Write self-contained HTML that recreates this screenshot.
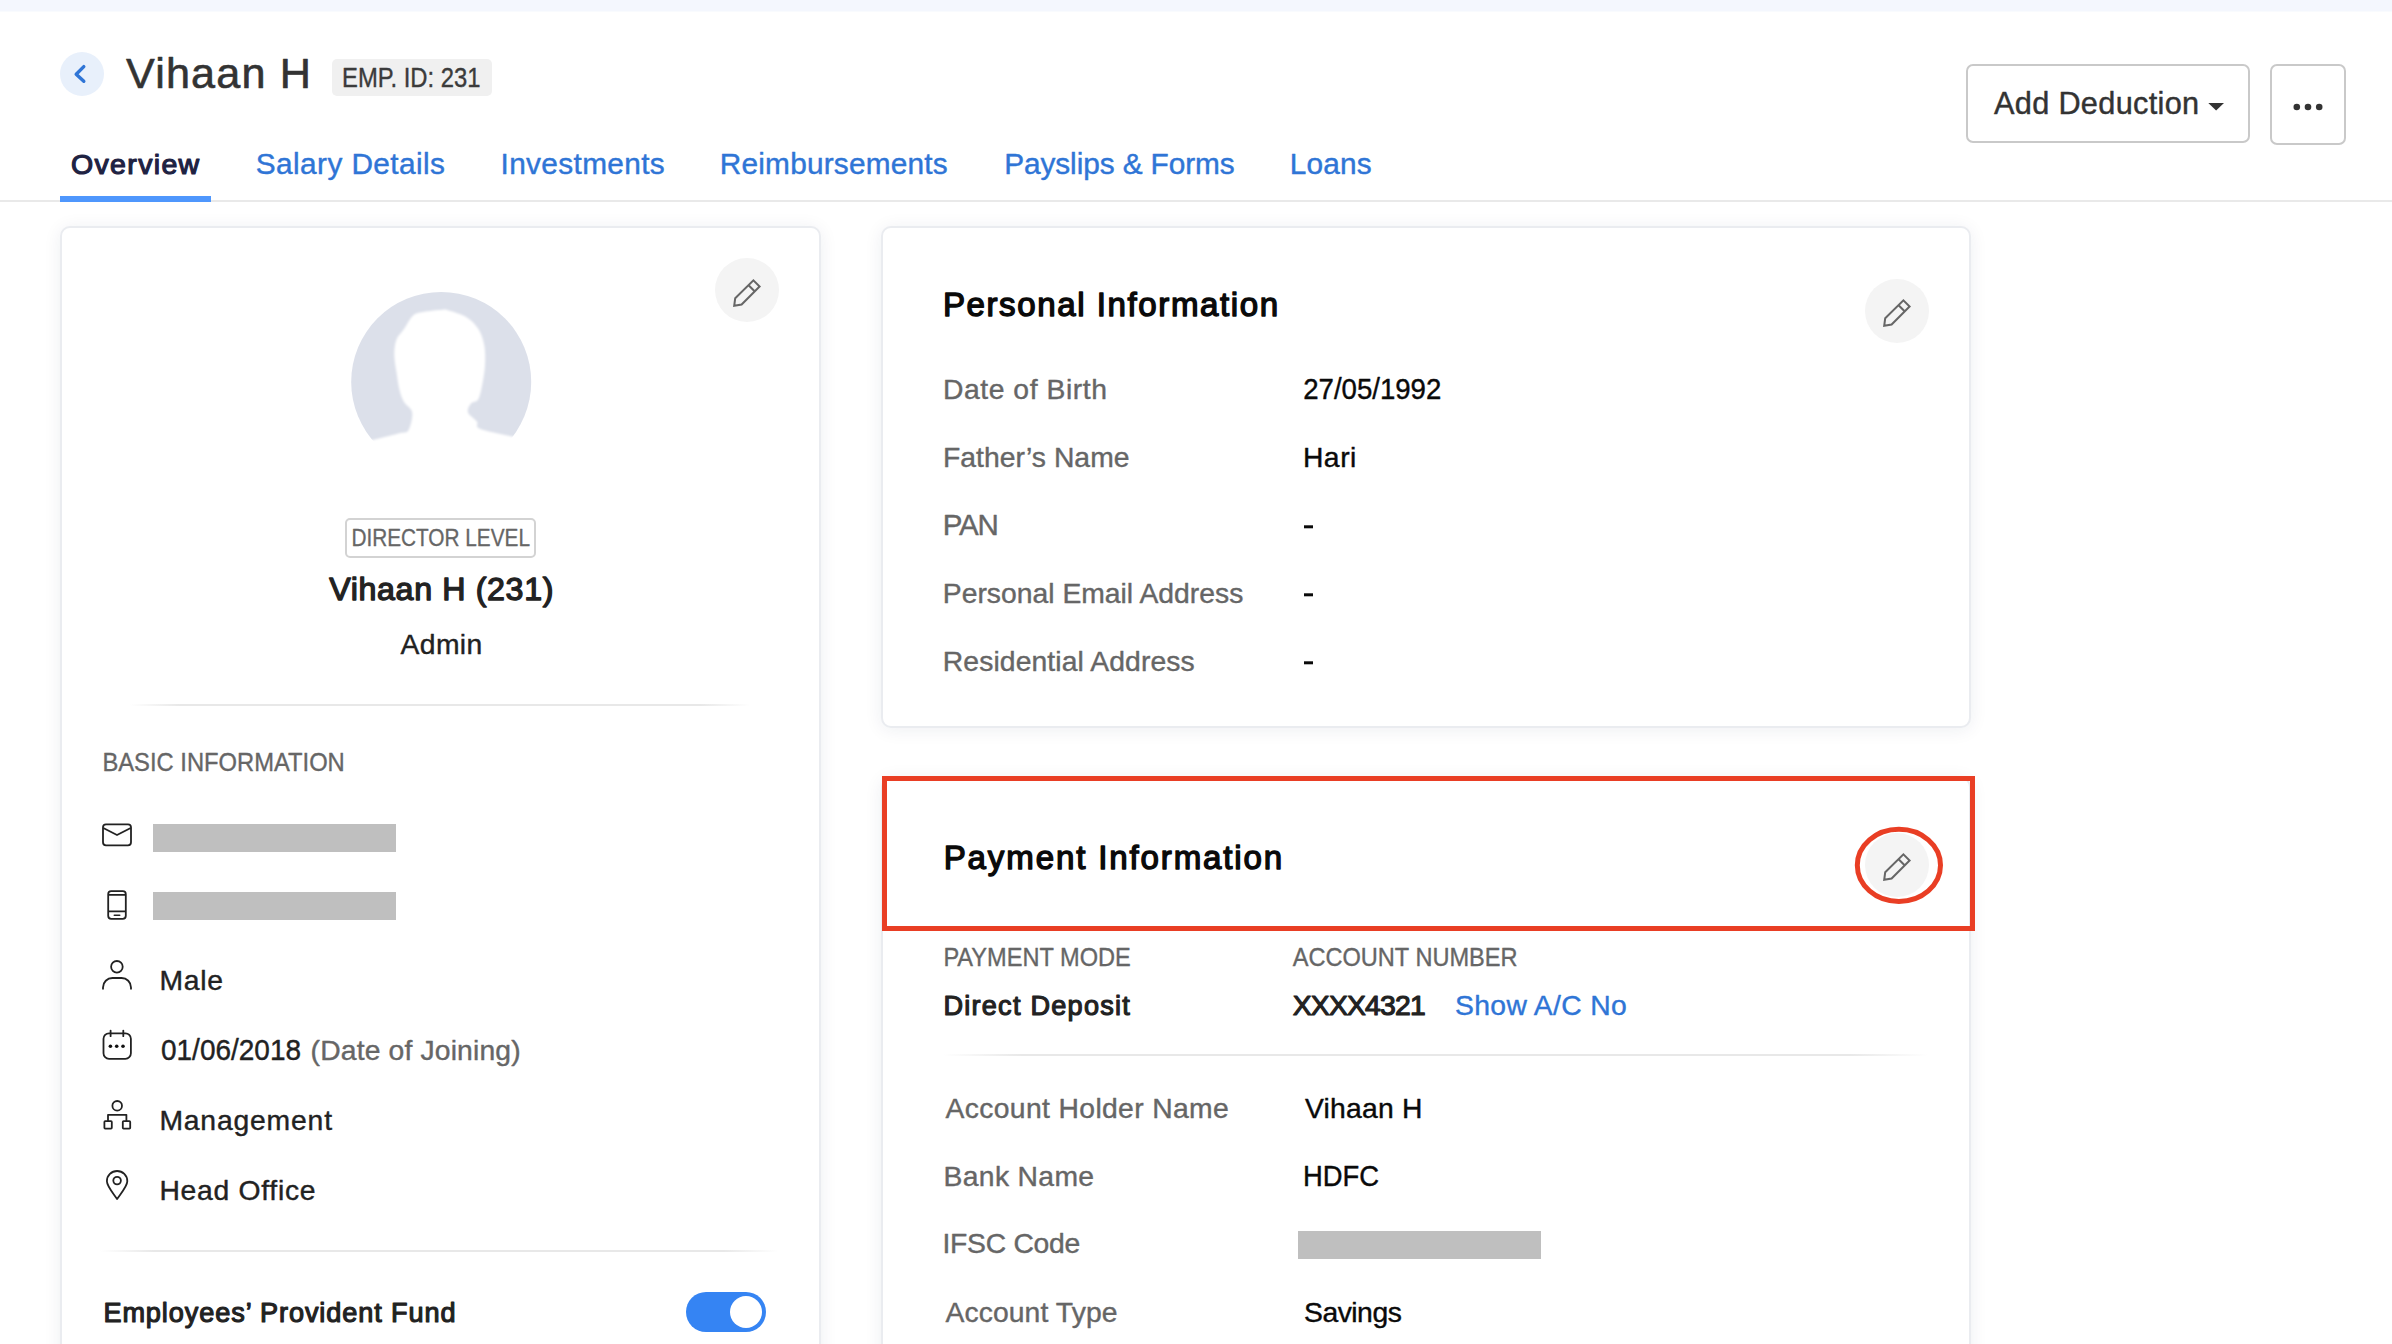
<!DOCTYPE html>
<html><head><meta charset="utf-8"><title>Vihaan H</title>
<style>
html,body{margin:0;padding:0;}
body{width:2392px;height:1344px;overflow:hidden;position:relative;background:#fff;font-family:"Liberation Sans",sans-serif;}
.a{position:absolute;box-sizing:border-box;}
.card{position:absolute;box-sizing:border-box;background:#fff;border:2px solid #eaecf0;border-radius:10px;box-shadow:0 2px 18px rgba(30,40,80,0.075);}
.hr{position:absolute;height:2px;background:linear-gradient(90deg,rgba(232,232,232,0),#e8e8e8 8%,#e8e8e8 92%,rgba(232,232,232,0));}
svg text{font-family:"Liberation Sans",sans-serif;}
</style></head><body>
<div class="a" style="left:0;top:0;width:2392px;height:11px;background:#f4f7fe;"></div><div class="a" style="left:0;top:11px;width:2392px;height:1px;background:#f9fbfe;"></div>
<div class="a" style="left:60px;top:52px;width:44px;height:44px;border-radius:50%;background:#e8f0fb;"></div>
<div class="a" style="left:332px;top:59px;width:160px;height:37px;border-radius:5px;background:#f0f0f0;"></div>
<div class="a" style="left:1966px;top:64px;width:284px;height:79px;border:2px solid #c9c9c9;border-radius:7px;"></div>
<div class="a" style="left:2270px;top:64px;width:76px;height:81px;border:2px solid #c9c9c9;border-radius:7px;"></div>
<div class="a" style="left:0;top:200px;width:2392px;height:2px;background:#e9e9e9;"></div>
<div class="a" style="left:60px;top:196px;width:151px;height:6px;background:#4f97fd;"></div>

<div class="card" style="left:60px;top:226px;width:761px;height:1200px;"></div>
<div class="card" style="left:881px;top:226px;width:1090px;height:502px;"></div>
<div class="card" style="left:881px;top:777px;width:1090px;height:700px;"></div>

<div class="a" style="left:715px;top:258px;width:64px;height:64px;border-radius:50%;background:#f4f4f4;"></div>
<div class="a" style="left:1865px;top:279px;width:64px;height:64px;border-radius:50%;background:#f4f4f4;"></div>
<div class="a" style="left:1865px;top:833px;width:64px;height:64px;border-radius:50%;background:#f4f4f4;"></div>

<div class="a" style="left:345px;top:518px;width:191px;height:40px;border:2px solid #d3d3d3;border-radius:5px;"></div>
<div class="hr" style="left:130px;top:704px;width:620px;"></div>
<div class="a" style="left:153px;top:824px;width:243px;height:28px;background:#bfbfbf;"></div>
<div class="a" style="left:153px;top:892px;width:243px;height:28px;background:#bfbfbf;"></div>
<div class="hr" style="left:100px;top:1250px;width:678px;"></div>
<div class="a" style="left:686px;top:1292px;width:80px;height:40px;border-radius:20px;background:#3584f3;"></div>
<div class="a" style="left:730px;top:1296px;width:32px;height:32px;border-radius:50%;background:#fff;"></div>

<div class="hr" style="left:943px;top:1054px;width:985px;"></div>
<div class="a" style="left:1298px;top:1231px;width:243px;height:28px;background:#bfbfbf;"></div>

<div class="a" style="left:882px;top:776px;width:1092.6px;height:154.5px;border:5px solid #e93e24;"></div>

<svg class="a" style="left:0;top:0;" width="2392" height="1344" viewBox="0 0 2392 1344">
<path d="M83.8,66.6 L76.2,74.2 L83.8,81.3" fill="none" stroke="#2f75d6" stroke-width="3.4" stroke-linecap="round" stroke-linejoin="round"/>
<path d="M2208.3,103 L2224,103 L2216.1,110.6 Z" fill="#333"/>
<circle cx="2296.8" cy="107" r="3.3" fill="#333"/>
<circle cx="2308.0" cy="107" r="3.3" fill="#333"/>
<circle cx="2319.2" cy="107" r="3.3" fill="#333"/>
<g transform="translate(733.0,279.0)" fill="none" stroke="#666" stroke-width="2" stroke-linejoin="miter"><path d="M2.2,19.3 L20.4,1.4 L26.6,7.5 L8.6,25.5 L1.2,26.8 Z"/><path d="M15.6,6.2 L21.6,12.2"/></g>
<g transform="translate(1883.0,299.0)" fill="none" stroke="#666" stroke-width="2" stroke-linejoin="miter"><path d="M2.2,19.3 L20.4,1.4 L26.6,7.5 L8.6,25.5 L1.2,26.8 Z"/><path d="M15.6,6.2 L21.6,12.2"/></g>
<g transform="translate(1883.0,853.0)" fill="none" stroke="#666" stroke-width="2" stroke-linejoin="miter"><path d="M2.2,19.3 L20.4,1.4 L26.6,7.5 L8.6,25.5 L1.2,26.8 Z"/><path d="M15.6,6.2 L21.6,12.2"/></g>
<rect x="103" y="824.3" width="28" height="21" rx="3" fill="none" stroke="#222" stroke-width="1.8"/>
<path d="M103.3,828 L117,835 L130.7,828" fill="none" stroke="#222" stroke-width="1.8" stroke-linejoin="round"/>
<rect x="108.2" y="891.2" width="17.6" height="27.6" rx="3" fill="none" stroke="#222" stroke-width="1.8"/>
<path d="M108.2,894.8 H125.8 M108.2,911.3 H125.8" fill="none" stroke="#222" stroke-width="1.8"/>
<path d="M114.3,915.3 H119.7" fill="none" stroke="#222" stroke-width="1.6" stroke-linecap="round"/>
<circle cx="116.9" cy="966.8" r="5.8" fill="none" stroke="#222" stroke-width="1.8"/>
<path d="M103,989.6 V987.4 A9.4,9.4 0 0 1 112.4,978 H121.6 A9.4,9.4 0 0 1 131,987.4 V989.6" fill="none" stroke="#222" stroke-width="1.8"/>
<rect x="103.5" y="1033.3" width="27.4" height="25.5" rx="5.5" fill="none" stroke="#222" stroke-width="1.8"/>
<path d="M110.6,1030.6 V1036.2 M123.3,1030.6 V1036.2" fill="none" stroke="#222" stroke-width="1.8" stroke-linecap="round"/>
<circle cx="110.4" cy="1046.3" r="1.8" fill="#111"/>
<circle cx="116.7" cy="1046.3" r="1.8" fill="#111"/>
<circle cx="123.0" cy="1046.3" r="1.8" fill="#111"/>
<circle cx="117.2" cy="1105.8" r="4.8" fill="none" stroke="#222" stroke-width="1.8"/>
<path d="M108,1121 V1114.8 H126.4 V1121" fill="none" stroke="#222" stroke-width="1.8" stroke-linejoin="round"/>
<rect x="104.4" y="1121.2" width="7.4" height="7.4" rx="0.8" fill="none" stroke="#222" stroke-width="1.8"/>
<rect x="122.8" y="1121.2" width="7.4" height="7.4" rx="0.8" fill="none" stroke="#222" stroke-width="1.8"/>
<path d="M117.1,1199 C113,1193 106.9,1186 106.9,1181.2 A10.2,10.2 0 0 1 127.3,1181.2 C127.3,1186 121.2,1193 117.1,1199 Z" fill="none" stroke="#222" stroke-width="1.8" stroke-linejoin="round"/>
<circle cx="117.1" cy="1180.6" r="3.8" fill="none" stroke="#222" stroke-width="1.8"/>
<defs><clipPath id="avc"><circle cx="441.2" cy="381.9" r="90"/></clipPath><filter id="blr"><feGaussianBlur stdDeviation="0.8"/></filter></defs>
<circle cx="441.2" cy="381.9" r="90" fill="#dce0ea"/>
<path filter="url(#blr)" fill="#fff" d="M560.0,446.0 C551.9,444.4 524.5,439.2 511.1,436.3 C497.8,433.4 485.6,431.3 479.9,428.8 C474.2,426.3 478.9,424.1 476.9,421.4 C474.9,418.7 469.0,415.4 468.0,412.4 C467.0,409.4 469.3,405.7 471.0,403.5 C472.7,401.3 476.4,402.7 478.4,399.0 C480.4,395.3 481.8,387.1 482.9,381.2 C484.0,375.2 484.9,369.2 485.1,363.3 C485.3,357.4 485.4,351.2 484.3,345.5 C483.2,339.8 481.4,333.8 478.4,329.1 C475.4,324.4 471.5,320.3 466.5,317.2 C461.5,314.1 452.6,311.7 448.6,310.5 C444.6,309.3 446.9,309.6 442.7,309.8 C438.5,310.1 428.3,311.0 423.3,312.0 C418.3,313.0 416.1,312.8 412.9,315.7 C409.7,318.6 406.7,325.1 404.0,329.1 C401.3,333.1 398.1,335.3 396.5,339.5 C394.9,343.7 394.3,348.9 394.3,354.4 C394.3,359.9 395.6,366.4 396.5,372.3 C397.4,378.2 398.2,385.2 399.5,390.1 C400.8,395.1 401.9,398.3 404.0,402.0 C406.1,405.7 411.4,407.7 412.2,412.4 C412.9,417.1 410.6,426.8 408.5,430.3 C406.4,433.8 405.0,431.8 399.5,433.3 C394.0,434.8 387.3,436.4 375.7,439.2 C364.1,442.0 337.6,448.2 330.0,450.0 L330,500 L560,500 Z"/>
<ellipse cx="1898.9" cy="865.3" rx="41.6" ry="36.1" fill="none" stroke="#e93e24" stroke-width="5"/>
<rect x="1304" y="525.3" width="9" height="3" fill="#0a0a0a"/>
<rect x="1304" y="593.3" width="9" height="3" fill="#0a0a0a"/>
<rect x="1304" y="661.3" width="9" height="3" fill="#0a0a0a"/>
<text x="126.0" y="88.0" textLength="185.0" lengthAdjust="spacing" style="font-size:43.2px;fill:#333333;stroke:#333333;stroke-width:0.60px;stroke-linejoin:round;">Vihaan H</text>
<text x="342.0" y="87.4" textLength="138.5" lengthAdjust="spacingAndGlyphs" style="font-size:27.0px;fill:#3b3b3b;stroke:#3b3b3b;stroke-width:0.38px;stroke-linejoin:round;">EMP. ID: 231</text>
<text x="71.0" y="174.0" textLength="128.2" lengthAdjust="spacing" style="font-size:28.5px;fill:#1e2242;stroke:#1e2242;stroke-width:1.20px;stroke-linejoin:round;">Overview</text>
<text x="255.8" y="174.0" textLength="189.2" lengthAdjust="spacing" style="font-size:29.8px;fill:#2f75d6;stroke:#2f75d6;stroke-width:0.42px;stroke-linejoin:round;">Salary Details</text>
<text x="500.5" y="174.0" textLength="164.2" lengthAdjust="spacing" style="font-size:29.8px;fill:#2f75d6;stroke:#2f75d6;stroke-width:0.42px;stroke-linejoin:round;">Investments</text>
<text x="719.8" y="174.0" textLength="227.8" lengthAdjust="spacing" style="font-size:29.8px;fill:#2f75d6;stroke:#2f75d6;stroke-width:0.42px;stroke-linejoin:round;">Reimbursements</text>
<text x="1004.2" y="174.0" textLength="230.5" lengthAdjust="spacing" style="font-size:29.8px;fill:#2f75d6;stroke:#2f75d6;stroke-width:0.42px;stroke-linejoin:round;">Payslips &amp; Forms</text>
<text x="1289.8" y="174.0" textLength="81.8" lengthAdjust="spacing" style="font-size:29.8px;fill:#2f75d6;stroke:#2f75d6;stroke-width:0.42px;stroke-linejoin:round;">Loans</text>
<text x="1994.0" y="114.3" textLength="205.1" lengthAdjust="spacing" style="font-size:30.7px;fill:#333333;stroke:#333333;stroke-width:0.43px;stroke-linejoin:round;">Add Deduction</text>
<text x="351.4" y="546.2" textLength="178.6" lengthAdjust="spacingAndGlyphs" style="font-size:23.0px;fill:#666666;stroke:#666666;stroke-width:0.32px;stroke-linejoin:round;">DIRECTOR LEVEL</text>
<text x="329.2" y="600.0" textLength="224.2" lengthAdjust="spacing" style="font-size:32.2px;fill:#222222;stroke:#222222;stroke-width:1.35px;stroke-linejoin:round;">Vihaan H (231)</text>
<text x="400.5" y="654.1" textLength="81.8" lengthAdjust="spacing" style="font-size:28.3px;fill:#222222;stroke:#222222;stroke-width:0.40px;stroke-linejoin:round;">Admin</text>
<text x="102.4" y="771.4" textLength="242.4" lengthAdjust="spacingAndGlyphs" style="font-size:25.5px;fill:#666666;stroke:#666666;stroke-width:0.36px;stroke-linejoin:round;">BASIC INFORMATION</text>
<text x="159.4" y="990.1" textLength="63.6" lengthAdjust="spacing" style="font-size:28.3px;fill:#222222;stroke:#222222;stroke-width:0.40px;stroke-linejoin:round;">Male</text>
<text x="161.0" y="1060.4" textLength="140.0" lengthAdjust="spacingAndGlyphs" style="font-size:29.5px;fill:#222222;stroke:#222222;stroke-width:0.41px;stroke-linejoin:round;">01/06/2018</text>
<text x="310.6" y="1060.4" textLength="210.0" lengthAdjust="spacing" style="font-size:28.3px;fill:#666666;stroke:#666666;stroke-width:0.40px;stroke-linejoin:round;">(Date of Joining)</text>
<text x="159.4" y="1130.1" textLength="172.6" lengthAdjust="spacing" style="font-size:28.3px;fill:#222222;stroke:#222222;stroke-width:0.40px;stroke-linejoin:round;">Management</text>
<text x="159.4" y="1200.4" textLength="156.1" lengthAdjust="spacing" style="font-size:28.3px;fill:#222222;stroke:#222222;stroke-width:0.40px;stroke-linejoin:round;">Head Office</text>
<text x="103.4" y="1322.2" textLength="352.2" lengthAdjust="spacing" style="font-size:27.1px;fill:#222222;stroke:#222222;stroke-width:1.14px;stroke-linejoin:round;">Employees’ Provident Fund</text>
<text x="942.9" y="316.3" textLength="335.2" lengthAdjust="spacing" style="font-size:33.1px;fill:#0a0a0a;stroke:#0a0a0a;stroke-width:1.39px;stroke-linejoin:round;">Personal Information</text>
<text x="942.9" y="399.1" textLength="164.1" lengthAdjust="spacing" style="font-size:28.3px;fill:#666666;stroke:#666666;stroke-width:0.40px;stroke-linejoin:round;">Date of Birth</text>
<text x="942.9" y="467.2" textLength="186.6" lengthAdjust="spacing" style="font-size:28.3px;fill:#666666;stroke:#666666;stroke-width:0.40px;stroke-linejoin:round;">Father’s Name</text>
<text x="942.8" y="535.0" textLength="55.9" lengthAdjust="spacing" style="font-size:29.5px;fill:#666666;stroke:#666666;stroke-width:0.41px;stroke-linejoin:round;">PAN</text>
<text x="942.8" y="603.0" textLength="300.5" lengthAdjust="spacing" style="font-size:28.3px;fill:#666666;stroke:#666666;stroke-width:0.40px;stroke-linejoin:round;">Personal Email Address</text>
<text x="942.8" y="671.0" textLength="251.9" lengthAdjust="spacing" style="font-size:28.3px;fill:#666666;stroke:#666666;stroke-width:0.40px;stroke-linejoin:round;">Residential Address</text>
<text x="1303.2" y="399.0" textLength="138.1" lengthAdjust="spacingAndGlyphs" style="font-size:29.5px;fill:#0a0a0a;stroke:#0a0a0a;stroke-width:0.41px;stroke-linejoin:round;">27/05/1992</text>
<text x="1302.9" y="466.9" textLength="53.5" lengthAdjust="spacing" style="font-size:28.3px;fill:#0a0a0a;stroke:#0a0a0a;stroke-width:0.40px;stroke-linejoin:round;">Hari</text>
<text x="943.7" y="868.8" textLength="338.5" lengthAdjust="spacing" style="font-size:33.1px;fill:#0a0a0a;stroke:#0a0a0a;stroke-width:1.39px;stroke-linejoin:round;">Payment Information</text>
<text x="943.4" y="966.2" textLength="187.4" lengthAdjust="spacingAndGlyphs" style="font-size:25.5px;fill:#666666;stroke:#666666;stroke-width:0.36px;stroke-linejoin:round;">PAYMENT MODE</text>
<text x="1292.7" y="966.2" textLength="224.9" lengthAdjust="spacingAndGlyphs" style="font-size:25.5px;fill:#666666;stroke:#666666;stroke-width:0.36px;stroke-linejoin:round;">ACCOUNT NUMBER</text>
<text x="943.4" y="1014.5" textLength="186.4" lengthAdjust="spacing" style="font-size:27.1px;fill:#222222;stroke:#222222;stroke-width:1.14px;stroke-linejoin:round;">Direct Deposit</text>
<text x="1292.7" y="1014.5" textLength="133.0" lengthAdjust="spacing" style="font-size:28.3px;fill:#222222;stroke:#222222;stroke-width:1.19px;stroke-linejoin:round;">XXXX4321</text>
<text x="1455.1" y="1014.5" textLength="171.6" lengthAdjust="spacing" style="font-size:28.3px;fill:#2f75d6;stroke:#2f75d6;stroke-width:0.40px;stroke-linejoin:round;">Show A/C No</text>
<text x="945.5" y="1118.2" textLength="283.3" lengthAdjust="spacing" style="font-size:28.3px;fill:#666666;stroke:#666666;stroke-width:0.40px;stroke-linejoin:round;">Account Holder Name</text>
<text x="943.5" y="1185.9" textLength="150.6" lengthAdjust="spacing" style="font-size:28.3px;fill:#666666;stroke:#666666;stroke-width:0.40px;stroke-linejoin:round;">Bank Name</text>
<text x="942.5" y="1253.3" textLength="137.7" lengthAdjust="spacing" style="font-size:28.3px;fill:#666666;stroke:#666666;stroke-width:0.40px;stroke-linejoin:round;">IFSC Code</text>
<text x="945.5" y="1321.8" textLength="172.0" lengthAdjust="spacing" style="font-size:28.3px;fill:#666666;stroke:#666666;stroke-width:0.40px;stroke-linejoin:round;">Account Type</text>
<text x="1305.0" y="1118.2" textLength="117.4" lengthAdjust="spacing" style="font-size:28.3px;fill:#0a0a0a;stroke:#0a0a0a;stroke-width:0.40px;stroke-linejoin:round;">Vihaan H</text>
<text x="1303.0" y="1185.9" textLength="76.0" lengthAdjust="spacingAndGlyphs" style="font-size:29.5px;fill:#0a0a0a;stroke:#0a0a0a;stroke-width:0.41px;stroke-linejoin:round;">HDFC</text>
<text x="1304.0" y="1321.8" textLength="97.8" lengthAdjust="spacing" style="font-size:28.3px;fill:#0a0a0a;stroke:#0a0a0a;stroke-width:0.40px;stroke-linejoin:round;">Savings</text>
</svg>
</body></html>
